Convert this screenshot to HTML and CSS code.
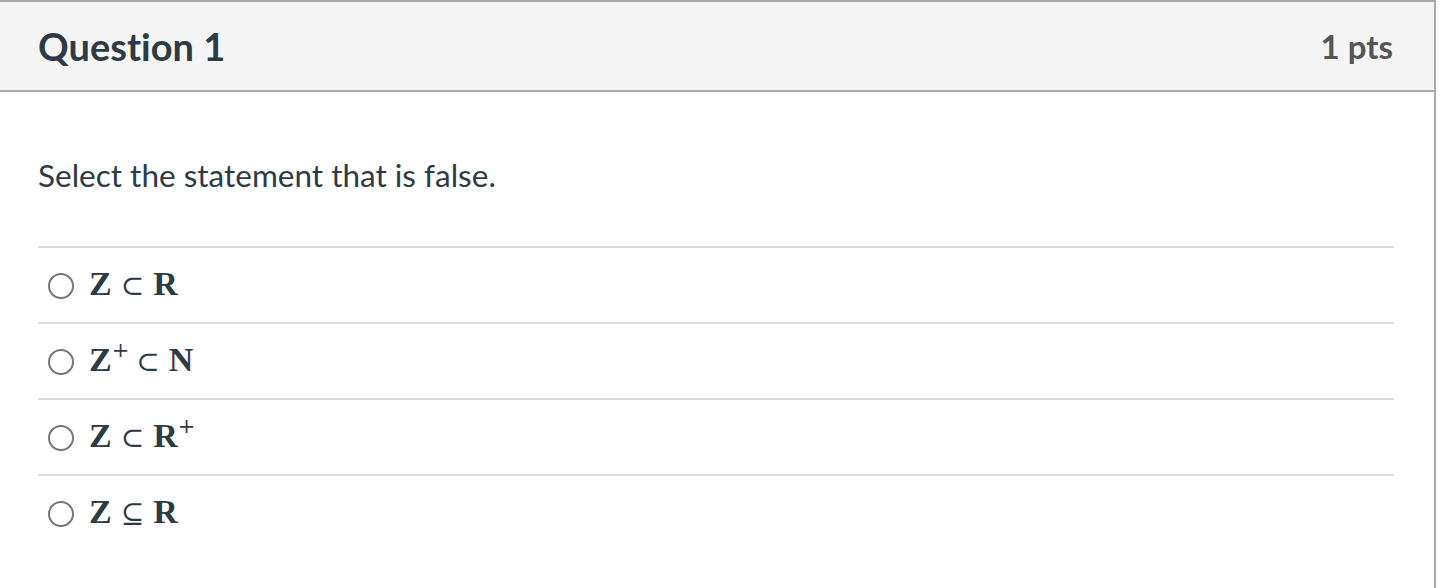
FILE: index.html
```html
<!DOCTYPE html>
<html>
<head>
<meta charset="utf-8">
<link rel="stylesheet" href="styles.css">
</head>
<body>
<div class="card">
  <div class="header">
    <h2 class="title">Question 1</h2>
    <span class="pts">1 pts</span>
  </div>
  <div class="body">
    <p class="prompt">Select the statement that is false.</p>
    <div class="answers">
      <div class="answer"><span class="radio"></span><span class="math"><b>Z</b><span class="op">⊂</span><b>R</b></span></div>
      <div class="answer"><span class="radio"></span><span class="math"><b>Z</b><sup>+</sup><span class="op">⊂</span><b>N</b></span></div>
      <div class="answer"><span class="radio"></span><span class="math"><b>Z</b><span class="op">⊂</span><b>R</b><sup>+</sup></span></div>
      <div class="answer"><span class="radio"></span><span class="math"><b>Z</b><span class="op">⊆</span><b>R</b></span></div>
    </div>
  </div>
</div>
</body>
</html>
```
FILE: styles.css
```css
html, body { margin: 0; padding: 0; background: #fff; }
body { font-family: Lato, "Liberation Sans", sans-serif; color: #2d3b45; font-variant-ligatures: none; }
.card {
  width: 1434px;
  border-top: 2px solid #aaa;
  border-right: 2px solid #aaa;
  min-height: 586px;
}
.header {
  height: 88px;
  background: #f5f5f5;
  border-bottom: 2px solid #aaa;
  display: flex;
  align-items: center;
  justify-content: space-between;
  padding: 0 41px 0 38px;
}
.title { margin: 0; font-size: 38px; font-weight: 700; color: #2d3b45; }
.pts { font-size: 33px; font-weight: 700; color: #555; }
.body { padding: 0 40px 0 38px; }
.prompt { margin: 0; padding-top: 65px; font-size: 31.5px; line-height: 36px; height: 89px; }
.answers { border-top: 2px solid #ddd; }
.answer {
  height: 74px;
  display: flex;
  align-items: center;
  border-bottom: 2px solid #ddd;
  padding-left: 10px;
}
.answer:last-child { border-bottom: none; }
.radio {
  width: 22px; height: 22px;
  border: 2px solid #777;
  border-radius: 50%;
  margin-right: 15px;
  margin-top: 2px;
  flex: none;
}
.math { font-family: "Liberation Serif", "DejaVu Serif", serif; font-size: 34px; line-height: 40px; color: #2d3b45; }
.math b { font-weight: 700; }
.op { font-family: "DejaVu Serif", serif; font-size: 28px; margin: 0 9px; }
.math sup { font-family: "DejaVu Serif", serif; font-weight: 400; font-size: 21px; line-height: 0; vertical-align: 14px; margin-left: 0; }
sup + .op { margin-left: 7px; }
```
